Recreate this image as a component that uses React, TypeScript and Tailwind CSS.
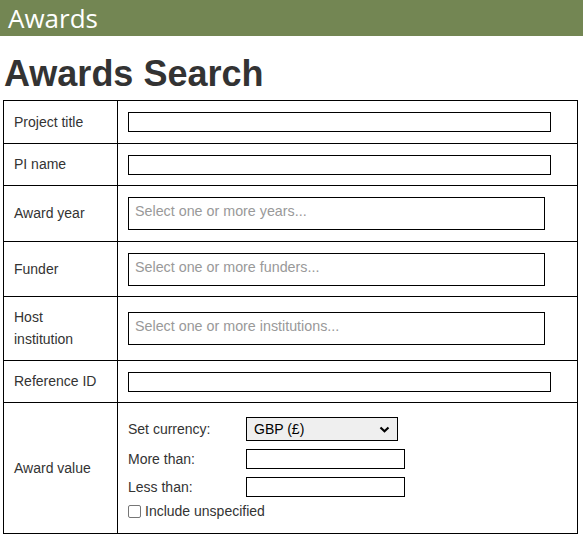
import React from "react";

const rows: { label: string; h: string; kind: "text" | "multi"; placeholder?: string }[] = [
  { label: "Project title", h: "h-[42px]", kind: "text" },
  { label: "PI name", h: "h-[42px]", kind: "text" },
  { label: "Award year", h: "h-[56px]", kind: "multi", placeholder: "Select one or more years..." },
  { label: "Funder", h: "h-[55px]", kind: "multi", placeholder: "Select one or more funders..." },
  { label: "Host institution", h: "h-[64px]", kind: "multi", placeholder: "Select one or more institutions..." },
  { label: "Reference ID", h: "h-[42px]", kind: "text" },
];

export default function App() {
  return (
    <div className="w-[583px] h-[540px] bg-white overflow-hidden text-[#333] font-['Liberation_Sans',Arial,sans-serif]">
      <div className="h-[36px] bg-[#738653] pl-[8px] text-white text-[26px] leading-[36px] font-['Open_Sans',sans-serif]">
        Awards
      </div>
      <h1 className="mt-[18px] mb-[6px] ml-[4px] text-[36px] leading-[40px] font-bold text-[#333]">Awards Search</h1>

      <div className="ml-[3px] w-[575px] border border-black text-[14px]">
        {rows.map((r, i) => (
          <div key={r.label} className={`flex ${r.h} ${i > 0 ? "border-t border-black" : ""}`}>
            <div className="w-[114px] shrink-0 border-r border-black pl-[10px] pr-[18px] pb-[1px] flex items-center leading-[22px]">
              {r.label}
            </div>
            <div className="flex-1 pl-[10px] flex items-center">
              {r.kind === "text" ? (
                <input className="w-[423px] h-[20px] border border-black bg-white outline-none" />
              ) : (
                <div className="w-[417px] h-[33px] border border-black flex items-center pl-[6px] pb-[3px] text-[#999] text-[14.3px]">
                  {r.placeholder}
                </div>
              )}
            </div>
          </div>
        ))}

        <div className="flex h-[131px] border-t border-black">
          <div className="w-[114px] shrink-0 border-r border-black pl-[10px] flex items-center">Award value</div>
          <div className="flex-1 pl-[10px] pt-[14px] flex flex-col">
            <div className="flex items-center h-[24px]">
              <span className="w-[118px]">Set currency:</span>
              <div className="relative w-[152px] h-[24px] border border-black bg-[#efefef] flex items-center pl-[7px] text-black">
                GBP (£)
                <svg className="absolute right-[7px] top-[8px]" width="11" height="7" viewBox="0 0 11 7">
                  <path d="M1.5 1.5 L5.5 5.2 L9.5 1.5" fill="none" stroke="#000" strokeWidth="2.2" />
                </svg>
              </div>
            </div>
            <div className="flex items-center h-[20px] mt-[8px]">
              <span className="w-[118px]">More than:</span>
              <input className="w-[159px] h-[20px] border border-black outline-none" />
            </div>
            <div className="flex items-center h-[20px] mt-[8px]">
              <span className="w-[118px]">Less than:</span>
              <input className="w-[159px] h-[20px] border border-black outline-none" />
            </div>
            <label className="flex items-center mt-[5px] h-[18px]">
              <span className="w-[13px] h-[13px] border border-[#767676] rounded-[2px] bg-white mr-[4px]" />
              Include unspecified
            </label>
          </div>
        </div>
      </div>
    </div>
  );
}
